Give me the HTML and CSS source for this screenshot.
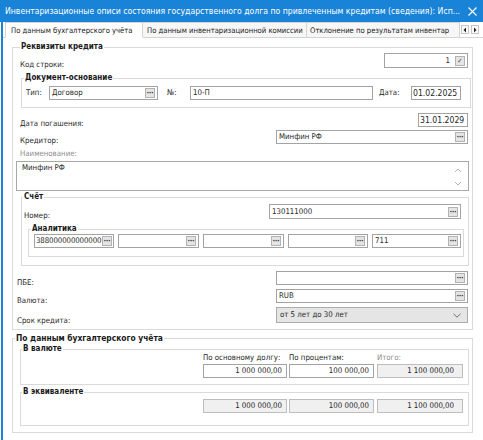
FILE: index.html
```html
<!DOCTYPE html>
<html lang="ru">
<head>
<meta charset="utf-8">
<title>Инвентаризационные описи</title>
<link rel="stylesheet" href="styles.css">
</head>
<body>
<div class="titlebar">
  <span class="title">Инвентаризационные описи состояния государственного долга по привлеченным кредитам (сведения): Исп...</span>
  <svg class="close" viewBox="0 0 9 9" width="9" height="9"><path d="M0.5 0.5L8.5 8.5M8.5 0.5L0.5 8.5" stroke="#fff" stroke-width="1.1" fill="none"/></svg>
</div>
<div class="client">
  <div class="tabs">
    <div class="tab tab1 active">По данным бухгалтерского учёта</div>
    <div class="tab tab2">По данным инвентаризационной комиссии</div>
    <div class="tab tab3">Отклонение по результатам инвентар</div>
    <div class="tab-arrows">
      <span class="arr"><svg viewBox="0 0 6 8" width="6" height="8"><path d="M4 1.5L1.5 4L4 6.5Z" fill="#222"/></svg></span>
      <span class="arr"><svg viewBox="0 0 6 8" width="6" height="8"><path d="M2 1.5L4.5 4L2 6.5Z" fill="#222"/></svg></span>
    </div>
  </div>

  <fieldset class="grp g-main">
    <legend>Реквизиты кредита</legend>
    <div class="row r-code">
      <span class="lbl">Код строки:</span>
      <div class="fld f-code"><span class="val right">1</span><span class="btn chk">✓</span></div>
    </div>

    <fieldset class="grp g-doc">
      <legend>Документ-основание</legend>
      <div class="doc-row">
        <span class="dlbl l-type">Тип:</span>
        <div class="fld f-type"><span class="val">Договор</span><span class="btn dots"></span></div>
        <span class="dlbl l-no">№:</span>
        <div class="fld f-no"><span class="val">10-П</span></div>
        <span class="dlbl l-date">Дата:</span>
        <div class="fld f-date"><span class="val date">01.02.2025</span></div>
      </div>
    </fieldset>

    <div class="row r-repay">
      <span class="lbl">Дата погашения:</span>
      <div class="fld f-date2"><span class="val date">31.01.2029</span></div>
    </div>
    <div class="row r-cred">
      <span class="lbl">Кредитор:</span>
      <div class="fld f-wide"><span class="val">Минфин РФ</span><span class="btn dots"></span></div>
    </div>
    <div class="lbl-gray">Наименование:</div>
    <div class="memo">
      <span class="memo-text">Минфин РФ</span>
      <span class="memo-scroll">
        <svg viewBox="0 0 8 5" width="8" height="5"><path d="M1 4L4 1L7 4" stroke="#b4b4b4" fill="none"/></svg>
        <svg viewBox="0 0 8 5" width="8" height="5"><path d="M1 1L4 4L7 1" stroke="#b4b4b4" fill="none"/></svg>
      </span>
    </div>

    <fieldset class="grp g-acct">
      <legend>Счёт</legend>
      <div class="row r-num">
        <span class="lbl">Номер:</span>
        <div class="fld f-num"><span class="val">130111000</span><span class="btn dots"></span></div>
      </div>
      <fieldset class="grp g-anal">
        <legend>Аналитика</legend>
        <div class="anal-row">
          <div class="fld a1"><span class="val">388000000000000</span><span class="btn dots"></span></div>
          <div class="fld a2"><span class="val"></span><span class="btn dots"></span></div>
          <div class="fld a3"><span class="val"></span><span class="btn dots"></span></div>
          <div class="fld a4"><span class="val"></span><span class="btn dots"></span></div>
          <div class="fld a5"><span class="val">711</span><span class="btn dots"></span></div>
        </div>
      </fieldset>
    </fieldset>

    <div class="row r-low r-pbe">
      <span class="lbl">ПБЕ:</span>
      <div class="fld f-wide"><span class="val"></span><span class="btn dots"></span></div>
    </div>
    <div class="row r-low r-cur">
      <span class="lbl">Валюта:</span>
      <div class="fld f-wide"><span class="val">RUB</span><span class="btn dots"></span></div>
    </div>
    <div class="row r-low r-term">
      <span class="lbl">Срок кредита:</span>
      <div class="combo"><span class="val">от 5 лет до 30 лет</span>
        <svg class="chev" viewBox="0 0 8 5" width="8" height="5"><path d="M0.5 0.8L4 4.2L7.5 0.8" stroke="#6e6e6e" fill="none"/></svg>
      </div>
    </div>
  </fieldset>

  <fieldset class="grp g-acc">
    <legend class="big">По данным бухгалтерского учёта</legend>
    <fieldset class="grp g-cur">
      <legend>В валюте</legend>
      <div class="cols head">
        <span class="c1">По основному долгу:</span>
        <span class="c2">По процентам:</span>
        <span class="c3 muted">Итого:</span>
      </div>
      <div class="cols">
        <div class="fld num c1"><span class="val right">1 000 000,00</span></div>
        <div class="fld num c2"><span class="val right">100 000,00</span></div>
        <div class="fld num c3 ro"><span class="val right pr8">1 100 000,00</span></div>
      </div>
    </fieldset>
    <fieldset class="grp g-eq">
      <legend>В эквиваленте</legend>
      <div class="cols">
        <div class="fld num c1 ro"><span class="val right">1 000 000,00</span></div>
        <div class="fld num c2 ro"><span class="val right">100 000,00</span></div>
        <div class="fld num c3 ro"><span class="val right pr8">1 100 000,00</span></div>
      </div>
    </fieldset>
  </fieldset>
</div>
</body>
</html>
```
FILE: styles.css
```css
html, body {
  margin: 0;
  padding: 0;
}
body {
  width: 483px;
  height: 440px;
  overflow: hidden;
  background: #ffffff;
  font-family: "DejaVu Sans Condensed", "DejaVu Sans", sans-serif;
  font-size: 7.8px;
  color: #1f1f1f;
}

/* title bar */
.titlebar {
  height: 22px;
  background: #1883d7;
  color: #ffffff;
  display: flex;
  align-items: center;
  padding-left: 5px;
  font-size: 8.6px;
}
.title {
  flex: 1;
  white-space: nowrap;
  overflow: hidden;
}
.close {
  margin: 0 6px 0 8px;
  flex: none;
}

/* client area */
.client {
  margin-left: 1px;
  border-left: 2px solid #1883d7;
  height: 418px;
  box-sizing: border-box;
}

/* tabs */
.tabs {
  display: flex;
  height: 16px;
  padding-left: 2px;
  box-sizing: border-box;
  border-bottom: 1px solid #d4d4d4;
  font-size: 7.6px;
  line-height: 15px;
}
.tab {
  box-sizing: border-box;
  height: 16px;
  border: 1px solid #d4d4d4;
  border-left: none;
  background: #f7f7f7;
  white-space: nowrap;
  overflow: hidden;
  color: #1a1a1a;
}
.tab1 {
  width: 138px;
  padding-left: 5px;
  border-left: 1px solid #d4d4d4;
  background: #ffffff;
  border-bottom-color: #ffffff;
}
.tab2 { width: 164px; padding-left: 4px; }
.tab3 { width: 153px; padding-left: 3px; }
.tab-arrows {
  display: flex;
  gap: 2px;
  padding: 3px 0 0 1px;
}
.arr {
  width: 8px;
  height: 9px;
  box-sizing: border-box;
  border: 1px solid #c6c6c6;
  background: #fbfbfb;
  display: flex;
  align-items: center;
  justify-content: center;
}

/* group boxes */
.grp {
  border: 1px solid #dadada;
  margin: 0;
  min-width: 0;
}
.grp > legend {
  font-weight: bold;
  font-size: 8px;
  line-height: 10px;
  padding: 0 1px;
  color: #1a1a1a;
}
.grp > legend.big {
  font-size: 8.4px;
}

.g-main {
  margin: 4px 10px 0 9px;
  padding: 1px 4px 6px 7px;
}
.g-main > legend { margin-left: 0; }

.row {
  display: flex;
  justify-content: space-between;
  align-items: flex-end;
}
.lbl {
  line-height: 10px;
  margin-bottom: -2px;
  white-space: nowrap;
}
.r-code { height: 15px; }
.r-repay { margin-top: 5px; }
.r-cred { margin-top: 3px; }
.r-low { margin-left: -3px; }
.r-low .lbl { margin-bottom: -3px; }
.r-pbe { margin-top: 5px; }
.r-cur { margin-top: 4px; }
.r-term { margin-top: 4px; }

/* fields */
.fld {
  box-sizing: border-box;
  height: 14px;
  border: 1px solid #a3a3a3;
  background: #ffffff;
  display: flex;
  align-items: center;
  overflow: hidden;
}
.val {
  flex: 1;
  min-width: 0;
  padding-left: 2px;
  line-height: 12px;
  white-space: nowrap;
  overflow: hidden;
}
.val.right {
  text-align: right;
  padding-right: 4px;
}
.val.pr8 { padding-right: 8px; }
.val.date {
  font-size: 8.6px;
  padding-left: 1px;
}
.btn {
  flex: none;
  box-sizing: border-box;
  width: 10px;
  height: 10px;
  margin-right: 2px;
  border: 1px solid #b2b2b2;
  background: #e4e4e4;
  display: flex;
  align-items: center;
  justify-content: center;
  color: #333;
}
.dots::after {
  content: "···";
  font-size: 7px;
  line-height: 6px;
  letter-spacing: -0.4px;
  margin-left: -0.4px;
  font-family: "DejaVu Sans", sans-serif;
  font-weight: bold;
}
.chk {
  font-size: 7px;
  line-height: 8px;
  color: #444;
}

.f-code {
  width: 84px;
  height: 15px;
}
.f-code .val.right { padding-right: 5px; }
.f-date2 {
  width: 50px;
}
.f-wide { width: 192px; }

/* document */
.g-doc {
  margin: 5px -3px 0 1px;
  padding: 3px 9px 7px 4px;
}
.g-doc > legend { margin-left: -2px; }
.doc-row {
  display: flex;
  align-items: center;
}
.dlbl {
  line-height: 10px;
  white-space: nowrap;
}
.l-type { width: 23px; }
.l-no { width: 23px; margin-left: 9px; }
.l-date { width: 32px; margin-left: 6px; }
.f-type { width: 109px; }
.f-no { width: 183px; }
.f-date { width: 50px; }

/* memo */
.lbl-gray {
  margin-top: 5px;
  line-height: 10px;
  color: #8c8c8c;
}
.memo {
  margin: 2px -1px 0 -4px;
  height: 30px;
  box-sizing: border-box;
  border: 1px solid #a8a8a8;
  display: flex;
  justify-content: space-between;
}
.memo-text {
  padding: 1px 0 0 5px;
  line-height: 10px;
}
.memo-scroll {
  width: 12px;
  margin-right: 4px;
  display: flex;
  flex-direction: column;
  justify-content: space-between;
  align-items: center;
  padding: 6px 0 4px;
}

/* account */
.g-acct {
  margin: 1px -1px 0 1px;
  padding: 2px 7px 8px 2px;
}
.g-acct > legend { margin-left: -1px; }
.r-num { height: 15px; }
.f-num { width: 192px; height: 15px; }
.g-anal {
  margin: 5px -3px 0 4px;
  padding: 0 2px 8px 5px;
}
.g-anal > legend { margin-left: -3px; }
.anal-row {
  display: flex;
  gap: 4px;
}
.a1 { width: 80px; }
.a2 { width: 81px; }
.a3 { width: 81px; }
.a4 { width: 80px; }
.a5 { flex: 1; }
.a1 .val { padding-left: 1px; letter-spacing: -0.1px; }
.a1 .btn { margin-right: 1px; }

/* combo */
.combo {
  box-sizing: border-box;
  width: 192px;
  height: 16px;
  border: 1px solid #acacac;
  background: #e5e5e5;
  display: flex;
  align-items: center;
}
.combo .val { padding-left: 3px; }
.chev { margin-right: 6px; flex: none; }

/* accounting group */
.g-acc {
  margin: 3px 10px 0 9px;
  padding: 0 3px 6px 7px;
}
.g-acc > legend { margin-left: -5px; }
.g-cur {
  margin: 1px 0 0 0;
  padding: 0 5px 6px 2px;
}
.g-cur > legend, .g-eq > legend { margin-left: -1px; }
.g-eq {
  margin: 2px 0 0 0;
  padding: 2px 5px 12px 2px;
}
.cols {
  display: flex;
  justify-content: flex-end;
}
.cols .c1 { width: 84px; }
.cols .c2 { width: 85px; margin-left: 2px; }
.cols .c3 { width: 86px; margin-left: 3px; }
.head {
  margin-top: -1px;
  line-height: 10px;
  white-space: nowrap;
}
.head + .cols { margin-top: 1px; }
.muted { color: #8c8c8c; }
.fld.num { border-color: #a3a3a3; }
.fld.ro {
  background: #f0f0f0;
  border-color: #bdbdbd;
}
```
